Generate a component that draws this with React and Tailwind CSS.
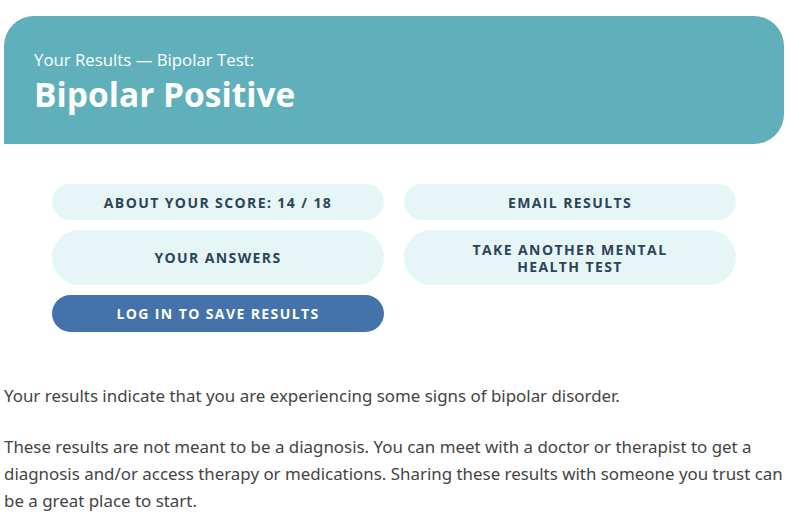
export default function App() {
  const heading = { fontFamily: '"Open Sans", "DejaVu Sans", sans-serif' }
  const body = { fontFamily: '"Noto Sans", "Open Sans", sans-serif' }

  return (
    <div className="bg-white min-h-screen pt-4 pl-1 pr-2" >
      <header
        className="bg-[#60b0bb] rounded-tl-[30px] rounded-tr-[30px] rounded-br-[30px] h-[128px] pl-[30px] pt-[32px] text-white"
        style={heading}
      >
        <p className="text-[16.8px] leading-[23px] font-normal">Your Results — Bipolar Test:</p>
        <h1 className="text-[33.5px] leading-[42px] font-bold mt-[2px]">Bipolar Positive</h1>
      </header>

      <div className="w-[684px] mx-auto mt-10 grid grid-cols-2 gap-x-5 gap-y-[10px]" style={heading}>
        <button className="h-9 rounded-full bg-[#e6f6f7] text-[#2c4358] text-[14px] font-bold tracking-[1.4px] uppercase">
          About your score: 14 / 18
        </button>
        <button className="h-9 rounded-full bg-[#e6f6f7] text-[#2c4358] text-[14px] font-bold tracking-[1.4px] uppercase">
          Email results
        </button>
        <button className="h-[55px] rounded-full bg-[#e6f6f7] text-[#2c4358] text-[14px] font-bold tracking-[1.4px] uppercase">
          Your answers
        </button>
        <button className="h-[55px] rounded-full bg-[#e6f6f7] text-[#2c4358] text-[14px] leading-[17px] font-bold tracking-[1.4px] uppercase px-16">
          Take another mental health test
        </button>
        <button className="h-[37px] rounded-full bg-[#4473ab] text-white text-[14px] font-bold tracking-[1.4px] uppercase">
          Log in to save results
        </button>
      </div>

      <div className="mt-[50px] -mr-2 text-[16.9px] leading-[27px] text-[#444444]" style={body}>
        <p>Your results indicate that you are experiencing some signs of bipolar disorder.</p>
        <p className="mt-6">
          These results are not meant to be a diagnosis. You can meet with a doctor or therapist to get a
          diagnosis and/or access therapy or medications. Sharing these results with someone you trust can
          be a great place to start.
        </p>
      </div>
    </div>
  )
}
